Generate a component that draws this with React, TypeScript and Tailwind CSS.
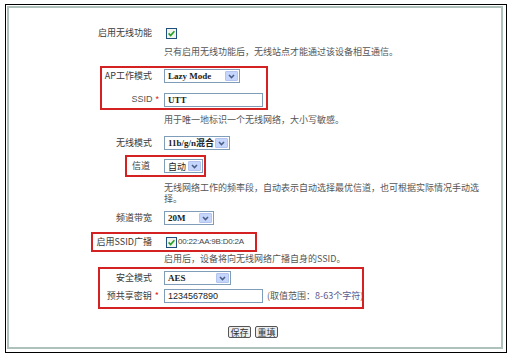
import React from "react";

function Chevron() {
  return (
    <span className="w-[13px] h-[10px] bg-[#c5d5fb] border border-[#b3c5ee] rounded-[1px] flex items-center justify-center shrink-0">
      <svg width="7" height="5" viewBox="0 0 7 5">
        <path d="M1 1 L3.5 3.6 L6 1" fill="none" stroke="#4a5f88" strokeWidth="1.5" />
      </svg>
    </span>
  );
}

function Select({ value, className, serif = true }: { value: React.ReactNode; className: string; serif?: boolean }) {
  return (
    <div className={`${className} h-[14px] border border-[#7f9db9] bg-white flex items-center justify-between pl-[3px] pr-px`}>
      <span
        className={
          serif
            ? "font-['Liberation_Serif','Noto_Sans_CJK_SC',serif] font-bold text-[9px] leading-none text-[#222]"
            : "text-[9px] leading-none text-[#222]"
        }
      >
        {value}
      </span>
      <Chevron />
    </div>
  );
}

function Checkbox() {
  return (
    <svg width="11" height="11" viewBox="0 0 11 11" className="shrink-0">
      <rect x="0.5" y="0.5" width="10" height="10" fill="#f3f3ee" stroke="#1f4f7f" />
      <path d="M2.6 5.4 L4.6 7.5 L8.4 3.2" fill="none" stroke="#22a022" strokeWidth="1.6" />
    </svg>
  );
}

function Star() {
  return <span className="text-[#e02020] ml-[3px] -mr-[7px]">*</span>;
}

export default function App() {
  return (
    <div className="w-[513px] h-[355px] bg-white pt-[4px] pl-[5px] font-['Noto_Sans_CJK_SC',sans-serif] text-[9px] text-[#3a3a3a]">
      <div className="w-[502px] h-[349px] border border-black pt-px pl-px pr-[3px] pb-[3px]">
        <div className="h-full border-2 border-[#aec2bb] bg-white relative pt-[15px]">
          {/* 启用无线功能 */}
          <div className="flex items-center h-[20px]">
            <div className="w-[143px] shrink-0 text-right">启用无线功能</div>
            <div className="ml-[12px] flex items-center pl-[2px]">
              <Checkbox />
            </div>
          </div>
          <div className="ml-[155px] h-[18px] flex items-center text-[#555]">
            只有启用无线功能后，无线站点才能通过该设备相互通信。
          </div>

          {/* AP工作模式 */}
          <div className="flex items-center h-[18px] mt-[6px]">
            <div className="w-[143px] shrink-0 text-right">AP工作模式</div>
            <div className="ml-[12px] flex items-center">
              <Select value="Lazy Mode" className="w-[76px]" />
            </div>
          </div>

          {/* SSID */}
          <div className="flex items-center h-[18px] mt-[6px]">
            <div className="w-[143px] shrink-0 text-right font-['Liberation_Sans','Noto_Sans_CJK_SC',sans-serif] text-[#555]">
              SSID
              <Star />
            </div>
            <div className="ml-[12px] flex items-center">
              <div className="w-[99px] h-[14px] border border-[#7f9db9] bg-white flex items-center pl-[3px] font-['Liberation_Serif',serif] font-bold text-[9px] leading-none text-[#222]">
                UTT
              </div>
            </div>
          </div>
          <div className="ml-[155px] h-[18px] mt-[2px] flex items-center text-[#555]">
            用于唯一地标识一个无线网络，大小写敏感。
          </div>

          {/* 无线模式 */}
          <div className="flex items-center h-[18px] mt-[5px]">
            <div className="w-[143px] shrink-0 text-right">无线模式</div>
            <div className="ml-[12px] flex items-center">
              <Select value="11b/g/n混合" className="w-[66px]" />
            </div>
          </div>

          {/* 信道 */}
          <div className="flex items-center h-[18px] mt-[5px]">
            <div className="w-[143px] shrink-0 text-right pr-[2px]">信道</div>
            <div className="ml-[12px] flex items-center">
              <Select value="自动" className="w-[39px]" serif={false} />
            </div>
          </div>
          <div className="ml-[155px] w-[318px] mt-[7px] leading-[11px] text-[#555]">
            无线网络工作的频率段，自动表示自动选择最优信道，也可根据实际情况手动选择。
          </div>

          {/* 频道带宽 */}
          <div className="flex items-center h-[18px] mt-[5px]">
            <div className="w-[143px] shrink-0 text-right">频道带宽</div>
            <div className="ml-[12px] flex items-center">
              <Select value="20M" className="w-[50px]" />
            </div>
          </div>

          {/* 启用SSID广播 */}
          <div className="flex items-center h-[18px] mt-[6px]">
            <div className="w-[143px] shrink-0 text-right">启用SSID广播</div>
            <div className="ml-[12px] flex items-center gap-px pl-[2px]">
              <Checkbox />
              <span className="font-['Liberation_Sans',sans-serif] text-[8px] tracking-[-0.2px] text-[#444]">00:22:AA:9B:D0:2A</span>
            </div>
          </div>
          <div className="ml-[155px] h-[16px] flex items-center text-[#555]">
            启用后，设备将向无线网络广播自身的SSID。
          </div>

          {/* 安全模式 */}
          <div className="flex items-center h-[18px] mt-[2px]">
            <div className="w-[143px] shrink-0 text-right">安全模式</div>
            <div className="ml-[12px] flex items-center">
              <Select value="AES" className="w-[67px]" />
            </div>
          </div>

          {/* 预共享密钥 */}
          <div className="flex items-center h-[18px]">
            <div className="w-[143px] shrink-0 text-right">
              预共享密钥
              <Star />
            </div>
            <div className="ml-[12px] flex items-center gap-[4px]">
              <div className="w-[99px] h-[14px] border border-[#7f9db9] bg-white flex items-center pl-[3px] font-['Liberation_Sans',sans-serif] text-[9px] leading-none text-[#222]">
                1234567890
              </div>
              <span className="text-[#555]">
                (取值范围：<span className="text-[#5a5a8c]">8-63个字符</span>)
              </span>
            </div>
          </div>

          {/* buttons */}
          <div className="flex items-center gap-[4px] ml-[219px] mt-[21px]">
            <button className="h-[12px] w-[23px] border border-[#555] rounded-[2px] bg-[#eeeeee] text-[9px] leading-none text-[#333]">
              保存
            </button>
            <button className="h-[12px] w-[23px] border border-[#555] rounded-[2px] bg-[#eeeeee] text-[9px] leading-none text-[#333]">
              重填
            </button>
          </div>

          {/* annotation boxes */}
          <div className="absolute left-[91px] top-[58px] w-[168px] h-[44px] border-2 border-[#d42121]" />
          <div className="absolute left-[116px] top-[147px] w-[81px] h-[22px] border-2 border-[#d42121]" />
          <div className="absolute left-[82px] top-[224px] w-[166px] h-[20px] border-2 border-[#d42121]" />
          <div className="absolute left-[89px] top-[259px] w-[266px] h-[42px] border-2 border-[#d42121]" />
        </div>
      </div>
    </div>
  );
}
